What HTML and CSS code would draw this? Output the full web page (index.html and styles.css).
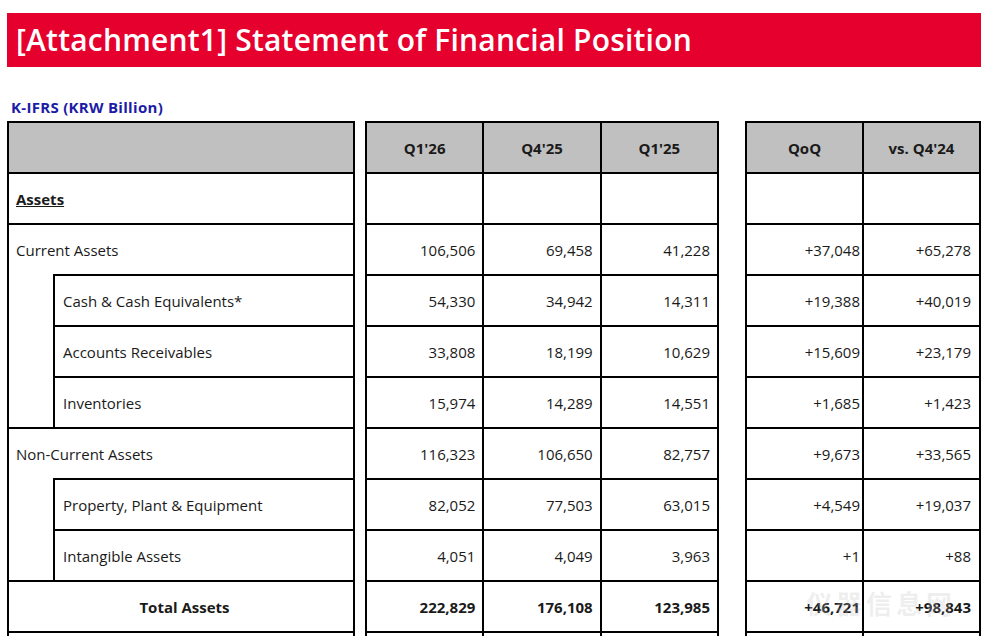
FILE: index.html
```html
<!DOCTYPE html>
<html lang="en">
<head>
<meta charset="UTF-8">
<meta name="viewport" content="width=device-width, initial-scale=1.0">
<title>Statement of Financial Position</title>
<link rel="stylesheet" href="styles.css">
</head>
<body>
<div class="page">
    <h1 class="title-bar">[Attachment1] Statement of Financial Position</h1>
    <div class="unit">K-IFRS (KRW Billion)</div>

    <div class="tables">
        <!-- account names -->
        <table class="fs names">
            <colgroup>
                <col class="indent">
                <col>
            </colgroup>
            <tr class="head"><td colspan="2"></td></tr>
            <tr><td colspan="2" class="section">Assets</td></tr>
            <tr><td colspan="2" class="open-bottom">Current Assets</td></tr>
            <tr><td rowspan="3" class="gap"></td><td class="sub">Cash &amp; Cash Equivalents*</td></tr>
            <tr><td class="sub">Accounts Receivables</td></tr>
            <tr><td class="sub">Inventories</td></tr>
            <tr><td colspan="2" class="open-bottom">Non-Current Assets</td></tr>
            <tr><td rowspan="2" class="gap"></td><td class="sub">Property, Plant &amp; Equipment</td></tr>
            <tr><td class="sub">Intangible Assets</td></tr>
            <tr class="total"><td colspan="2">Total Assets</td></tr>
            <tr><td colspan="2"></td></tr>
        </table>

        <!-- balances -->
        <table class="fs values">
            <tr class="head"><th>Q1'26</th><th>Q4'25</th><th>Q1'25</th></tr>
            <tr><td></td><td></td><td></td></tr>
            <tr><td>106,506</td><td>69,458</td><td>41,228</td></tr>
            <tr><td>54,330</td><td>34,942</td><td>14,311</td></tr>
            <tr><td>33,808</td><td>18,199</td><td>10,629</td></tr>
            <tr><td>15,974</td><td>14,289</td><td>14,551</td></tr>
            <tr><td>116,323</td><td>106,650</td><td>82,757</td></tr>
            <tr><td>82,052</td><td>77,503</td><td>63,015</td></tr>
            <tr><td>4,051</td><td>4,049</td><td>3,963</td></tr>
            <tr class="total"><td>222,829</td><td>176,108</td><td>123,985</td></tr>
            <tr><td></td><td></td><td></td></tr>
        </table>

        <!-- changes -->
        <table class="fs changes">
            <tr class="head"><th>QoQ</th><th>vs. Q4'24</th></tr>
            <tr><td></td><td></td></tr>
            <tr><td>+37,048</td><td>+65,278</td></tr>
            <tr><td>+19,388</td><td>+40,019</td></tr>
            <tr><td>+15,609</td><td>+23,179</td></tr>
            <tr><td>+1,685</td><td>+1,423</td></tr>
            <tr><td>+9,673</td><td>+33,565</td></tr>
            <tr><td>+4,549</td><td>+19,037</td></tr>
            <tr><td>+1</td><td>+88</td></tr>
            <tr class="total"><td>+46,721</td><td>+98,843</td></tr>
            <tr><td></td><td></td></tr>
        </table>
    </div>

    <div class="watermark">仪器信息网</div>
</div>
</body>
</html>
```

FILE: styles.css
```css
body {
    margin: 0;
    background: #fff;
    font-family: "Open Sans", "Noto Sans CJK KR", sans-serif;
    color: #1a1a1a;
    overflow: hidden;
}
.page {
    position: relative;
    padding: 13px 9px 0 7px;
    height: 636px;
    box-sizing: border-box;
    overflow: hidden;
}
.title-bar {
    margin: 0;
    height: 54px;
    background-color: #e6002d;
    color: #fff;
    font-size: 30px;
    font-weight: 600;
    line-height: 54px;
    padding-left: 9px;
    letter-spacing: 0.2px;
}
.unit {
    margin: 31px 0 5px 4px;
    color: #1c1ca6;
    font-size: 15px;
    font-weight: 700;
    line-height: 18px;
    letter-spacing: 0.3px;
}
.tables {
    display: flex;
    align-items: flex-start;
}
.fs {
    border-collapse: collapse;
    table-layout: fixed;
    font-size: 15px;
}
.fs td,
.fs th {
    border: 2px solid #000;
    height: 49px;
    padding: 0;
    white-space: nowrap;
}
.fs .head td,
.fs .head th {
    background-color: #c0c0c0;
    font-weight: 700;
    text-align: center;
}
.names {
    width: 348px;
}
.names col.indent {
    width: 46px;
}
.names td {
    padding-left: 7px;
}
.names td.sub {
    padding-left: 8px;
}
.names td.gap {
    border-top: none;
    border-bottom: none;
    border-right: none;
}
.names td.open-bottom {
    border-bottom: none;
}
.names .section {
    font-weight: 700;
    text-decoration: underline;
}
.fs .total td {
    font-weight: 700;
    text-align: center;
}
.values {
    width: 354px;
    margin-left: 10px;
}
.values td {
    text-align: right;
    padding-right: 7px;
}
.values .total td {
    text-align: right;
}
.changes {
    width: 236px;
    margin-left: 26px;
}
.changes td {
    text-align: right;
}
.changes td:first-child {
    padding-right: 2px;
}
.changes td:last-child {
    padding-right: 8px;
}
.changes .total td {
    text-align: right;
}
.watermark {
    position: absolute;
    left: 806px;
    top: 584px;
    font-family: "Noto Sans CJK SC", sans-serif;
    font-size: 26px;
    font-weight: 700;
    letter-spacing: 4px;
    color: rgba(190, 190, 190, 0.25);
}
```
